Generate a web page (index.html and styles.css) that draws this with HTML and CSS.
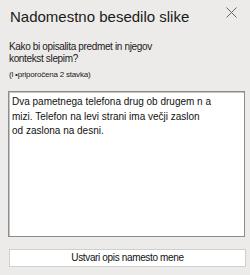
FILE: index.html
```html
<!DOCTYPE html>
<html>
<head>
<meta charset="utf-8">
<link rel="stylesheet" href="styles.css">
</head>
<body>
<div class="pane">
  <div class="header">
    <h1 class="title">Nadomestno besedilo slike</h1>
    <svg class="close" width="11" height="11" viewBox="0 0 11 11"><path d="M0.5 0.5 L10.5 10.5 M10.5 0.5 L0.5 10.5" stroke="#666" stroke-width="1" fill="none"/></svg>
  </div>
  <p class="question">Kako bi opisalita predmet in njegov<br>kontekst slepim?</p>
  <p class="hint">(l •priporočena 2 stavka)</p>
  <div class="textbox">Dva pametnega telefona drug ob drugem n a<br>mizi. Telefon na levi strani ima večji zaslon<br>od zaslona na desni.</div>
  <div class="button">Ustvari opis namesto mene</div>
</div>
</body>
</html>
```
FILE: styles.css
```css
html, body {
  margin: 0;
  padding: 0;
  background: #edebe9;
  width: 250px;
  height: 275px;
  overflow: hidden;
}
.pane {
  font-family: "Liberation Sans", Arial, sans-serif;
  color: #1a1a1a;
  padding: 0 5px 0 8px;
  display: flex;
  flex-direction: column;
}
.header {
  display: flex;
  justify-content: space-between;
  align-items: flex-start;
  padding: 8px 8px 0 2px;
}
.title {
  margin: 0;
  font-weight: normal;
  font-size: 15px;
  line-height: 18px;
}
.close {
  margin-top: -1px;
}
.question {
  margin: 15px 0 0 1px;
  font-size: 10px;
  line-height: 11.5px;
  letter-spacing: -0.35px;
}
.hint {
  margin: 6px 0 0 1px;
  font-size: 8px;
  line-height: 10px;
  letter-spacing: -0.2px;
}
.textbox {
  margin-top: 11px;
  height: 141px;
  background: #fff;
  border: 1px solid #8c8c8c;
  box-shadow: inset 1px 1px 0 #c4c4c4;
  padding: 3px 6px 0 3px;
  font-size: 10px;
  line-height: 14.5px;
  color: #111;
  white-space: nowrap;
}
.button {
  margin: 12px -1px 0 1px;
  height: 16px;
  background: #fff;
  border: 1px solid #cfcfcf;
  font-size: 10px;
  line-height: 16px;
  letter-spacing: -0.35px;
  text-align: center;
  color: #111;
}
```
